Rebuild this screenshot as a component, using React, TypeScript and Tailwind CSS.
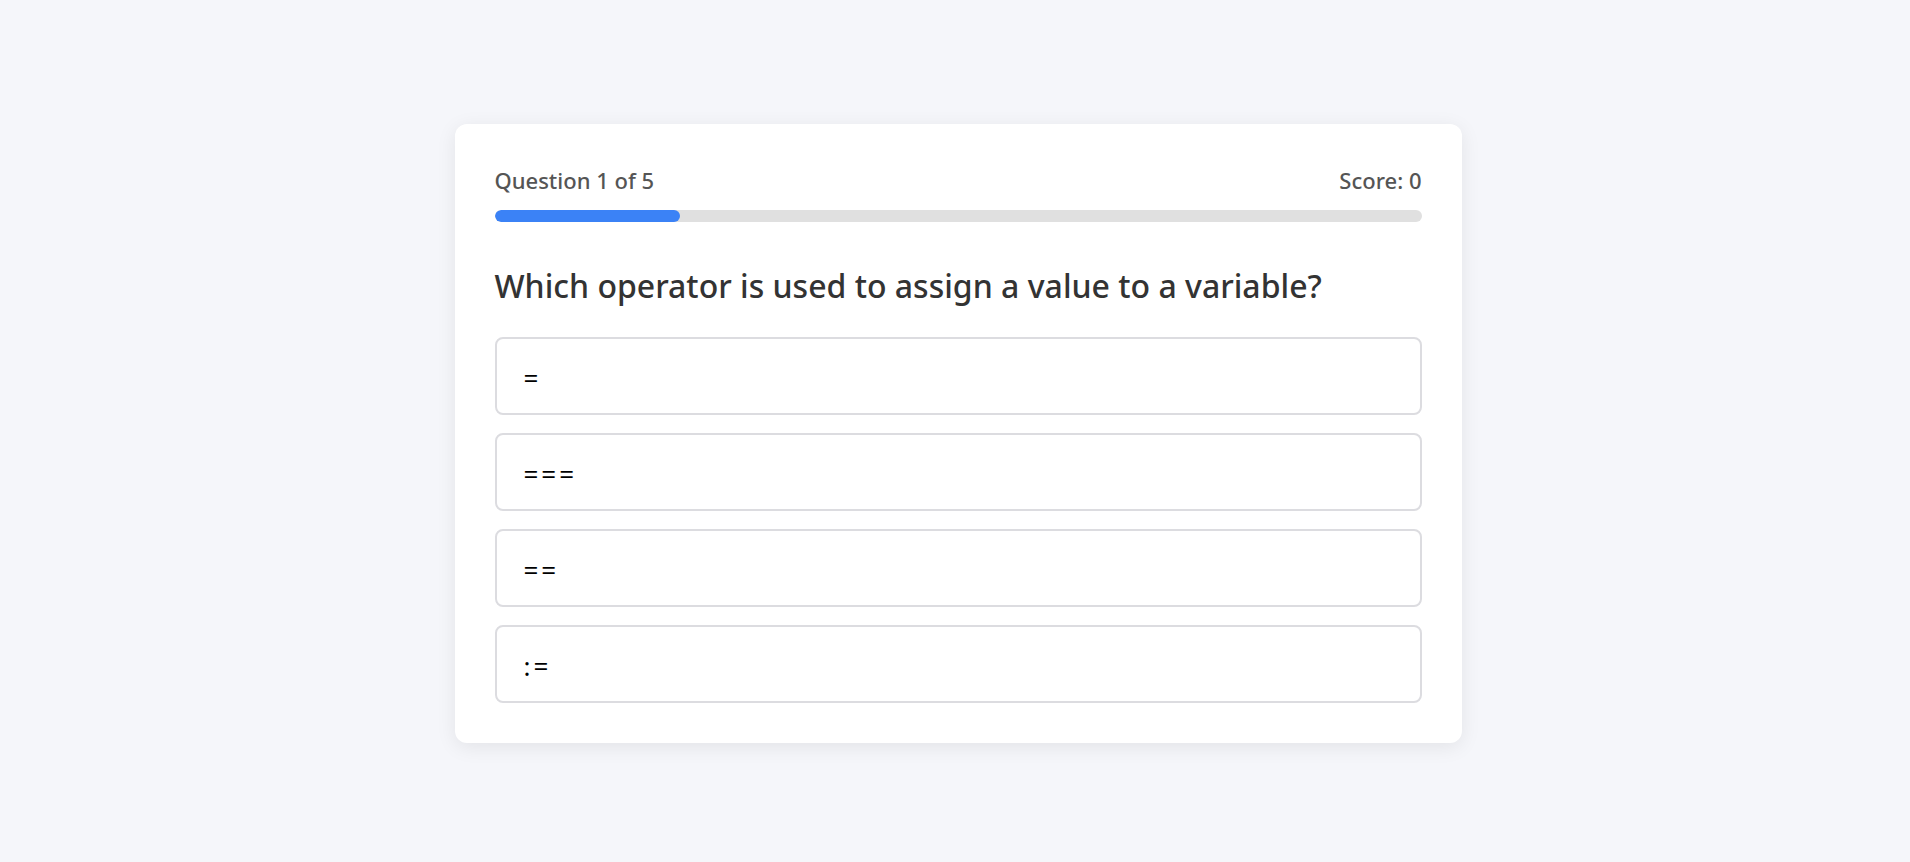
import React from "react";

const options = ["=", "===", "==", ":="];

export default function App() {
  return (
    <div
      className="min-h-[862px] w-full bg-[#f5f6fa] flex justify-center pt-[124px] pl-[6px]"
      style={{ fontFamily: '"Noto Sans", "Open Sans", sans-serif' }}
    >
      <div className="w-[1007px] h-[619px] bg-white rounded-[12px] shadow-[0_4px_20px_rgba(0,0,0,0.08)] px-[40px] pt-[40px] pb-[40px] flex flex-col">
        <div className="flex justify-between items-center h-[30px] pt-[2px] text-[22px] font-medium text-[#555]">
          <span>Question 1 of 5</span>
          <span>Score: 0</span>
        </div>
        <div className="mt-[16px] h-[12px] w-full bg-[#e0e0e0] rounded-full overflow-hidden">
          <div className="h-full bg-[#3b82f6] rounded-full" style={{ width: "20%" }} />
        </div>
        <h2 className="mt-[43px] h-[42px] leading-[42px] text-[32px] font-medium text-[#333]">
          Which operator is used to assign a value to a variable?
        </h2>
        <div className="mt-[30px] flex flex-col gap-[18px]">
          {options.map((o) => (
            <button
              key={o}
              className="h-[78px] w-full text-left bg-white border-2 border-[#dcdce0] rounded-[8px] px-[27px] pt-[4px] text-[26px] leading-[30px] text-black tracking-[3px]"
            >
              {o}
            </button>
          ))}
        </div>
      </div>
    </div>
  );
}
